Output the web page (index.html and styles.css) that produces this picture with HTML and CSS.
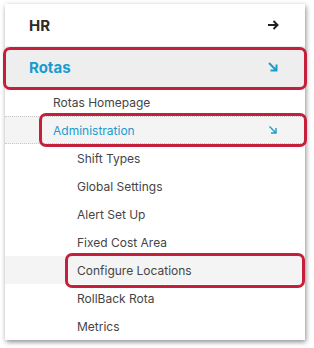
FILE: index.html
```html
<!DOCTYPE html>
<html>
<head>
<meta charset="utf-8">
<link rel="stylesheet" href="styles.css">
</head>
<body>
<nav class="panel">
  <div class="row top">
    <span class="label">HR</span>
    <svg class="ico" width="12" height="12" viewBox="0 0 12 12"><path d="M1 6H10.5M6.5 2L10.5 6L6.5 10" fill="none" stroke="#222" stroke-width="2" stroke-linejoin="miter"/></svg>
  </div>
  <div class="row top active mark mark-top">
    <span class="label">Rotas</span>
    <svg class="ico" width="12" height="12" viewBox="0 0 12 12"><path d="M2 2L9.5 9.5M3.5 9.5H9.5V3.5" fill="none" stroke="#1a9bd0" stroke-width="2"/></svg>
  </div>
  <div class="row sub">Rotas Homepage</div>
  <div class="row sub open mark mark-admin">
    <span class="label">Administration</span>
    <svg class="ico small" width="10" height="10" viewBox="0 0 10 10"><path d="M1.5 1.5L8 8M3 8H8V3" fill="none" stroke="#1a9bd0" stroke-width="1.4"/></svg>
  </div>
  <div class="row leaf">Shift Types</div>
  <div class="row leaf">Global Settings</div>
  <div class="row leaf">Alert Set Up</div>
  <div class="row leaf">Fixed Cost Area</div>
  <div class="row leaf current mark mark-conf">Configure Locations</div>
  <div class="row leaf">RollBack Rota</div>
  <div class="row leaf">Metrics</div>
</nav>
</body>
</html>
```

FILE: styles.css
```css
html, body {
  margin: 0;
  padding: 0;
  background: #ffffff;
}
body {
  padding: 4px 9px 10px 5px;
  font-family: Inter, "Noto Sans", sans-serif;
}
.panel {
  width: 300px;
  background: #ffffff;
  box-shadow: 1px 2px 5px rgba(0, 0, 0, 0.45);
  display: flex;
  flex-direction: column;
}
.row {
  position: relative;
  display: flex;
  align-items: center;
  justify-content: space-between;
  color: #454545;
  font-size: 12px;
  height: 28px;
}
.row.top {
  height: 42px;
  padding: 0 26px 0 24px;
  font-size: 15px;
  font-weight: 700;
  color: #2b2b2b;
}
.row.active {
  background: #eeeeee;
  color: #1a9bd0;
}
.row.sub {
  padding: 0 27px 0 48px;
}
.row.open {
  background: #f4f4f4;
  color: #1a9bd0;
  border-top: 1px dotted #c8c8c8;
  border-bottom: 1px dotted #c8c8c8;
  height: 26px;
}
.row.leaf {
  padding-left: 72px;
}
.row.current {
  background: #f4f4f4;
}
.ico {
  display: block;
}
.mark::after {
  content: "";
  position: absolute;
  border: 3px solid #c5203b;
  border-radius: 7px;
  pointer-events: none;
}
.mark-top::after {
  left: -2px;
  right: -2px;
  top: 1px;
  bottom: -2px;
}
.mark-admin::after {
  left: 34px;
  right: -2px;
  top: -4px;
  bottom: -4px;
}
.mark-conf::after {
  left: 60px;
  right: 0px;
  top: -3px;
  bottom: -4px;
}
```
